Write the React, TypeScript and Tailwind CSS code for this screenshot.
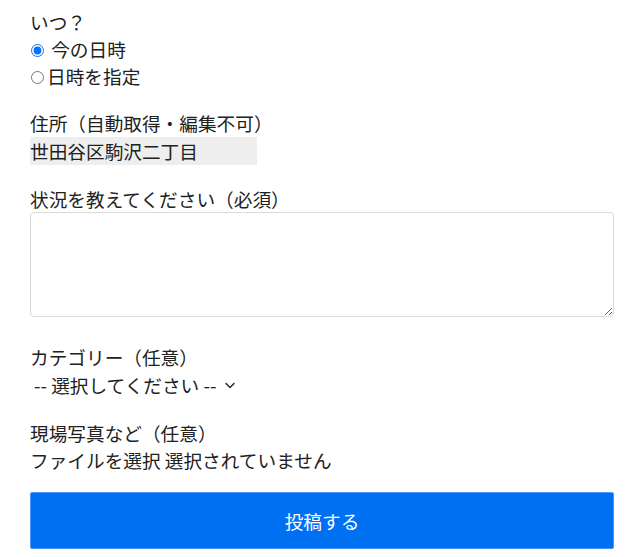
import React, { useState } from "react";

const App = () => {
  const [when, setWhen] = useState("now");
  const [category, setCategory] = useState("");
  const [note, setNote] = useState("");

  return (
    <div className="bg-white min-h-screen font-['Noto_Sans_CJK_JP',sans-serif] text-[18.67px] leading-[27px] text-[#212121]">
      <form
        onSubmit={(e) => e.preventDefault()}
        className="pl-[30px] pr-[26px] pt-[8px] pb-[8px]"
      >
        <div>
          <div>いつ？</div>
          <label className="block">
            <input
              type="radio"
              name="when"
              checked={when === "now"}
              onChange={() => setWhen("now")}
              className="w-[13px] h-[13px] ml-[1px] mr-[3px] align-[0px]"
            />{" "}
            今の日時
          </label>
          <label className="block">
            <input
              type="radio"
              name="when"
              checked={when === "custom"}
              onChange={() => setWhen("custom")}
              className="w-[13px] h-[13px] ml-[1px] mr-[3px] align-[0px]"
            />
            日時を指定
          </label>
        </div>

        <div className="mt-[20px]">
          <div>住所（自動取得・編集不可）</div>
          <div className="mt-[1px] w-[227px] h-[28px] leading-[28px] bg-[#eeeeee]">
            世田谷区駒沢二丁目
          </div>
        </div>

        <div className="mt-[20px]">
          <div>状況を教えてください（必須）</div>
          <textarea
            value={note}
            onChange={(e) => setNote(e.target.value)}
            className="block w-full h-[105px] border border-[#dadada] rounded-[4px] px-2 py-1 outline-none"
          />
        </div>

        <div className="mt-[26px]">
          <div>カテゴリー（任意）</div>
          <div className="relative inline-flex items-center h-[29px]">
            <select
              value={category}
              onChange={(e) => setCategory(e.target.value)}
              className="appearance-none h-[29px] pl-[4px] pr-[20px] outline-none cursor-pointer"
            >
              <option value="">-- 選択してください --</option>
              <option value="road">道路</option>
              <option value="park">公園</option>
              <option value="other">その他</option>
            </select>
            <svg
              className="absolute right-[1px] top-[12px] pointer-events-none"
              width="14"
              height="8"
              viewBox="0 0 14 8"
              fill="none"
              stroke="#333"
              strokeWidth="1.6"
              strokeLinecap="round"
              strokeLinejoin="round"
            >
              <polyline points="3,1.5 7,5.5 11,1.5" />
            </svg>
          </div>
        </div>

        <div className="mt-[20px]">
          <div>現場写真など（任意）</div>
          <label className="block cursor-pointer">
            <input type="file" className="hidden" />
            <span>ファイルを選択</span> <span>選択されていません</span>
          </label>
        </div>

        <button
          type="submit"
          className="mt-[19px] w-full h-[57px] bg-[#0070f3] border border-[#4a95f5] rounded-[2px] text-white text-[18.67px] cursor-pointer"
        >
          投稿する
        </button>
      </form>
    </div>
  );
};

export default App;
